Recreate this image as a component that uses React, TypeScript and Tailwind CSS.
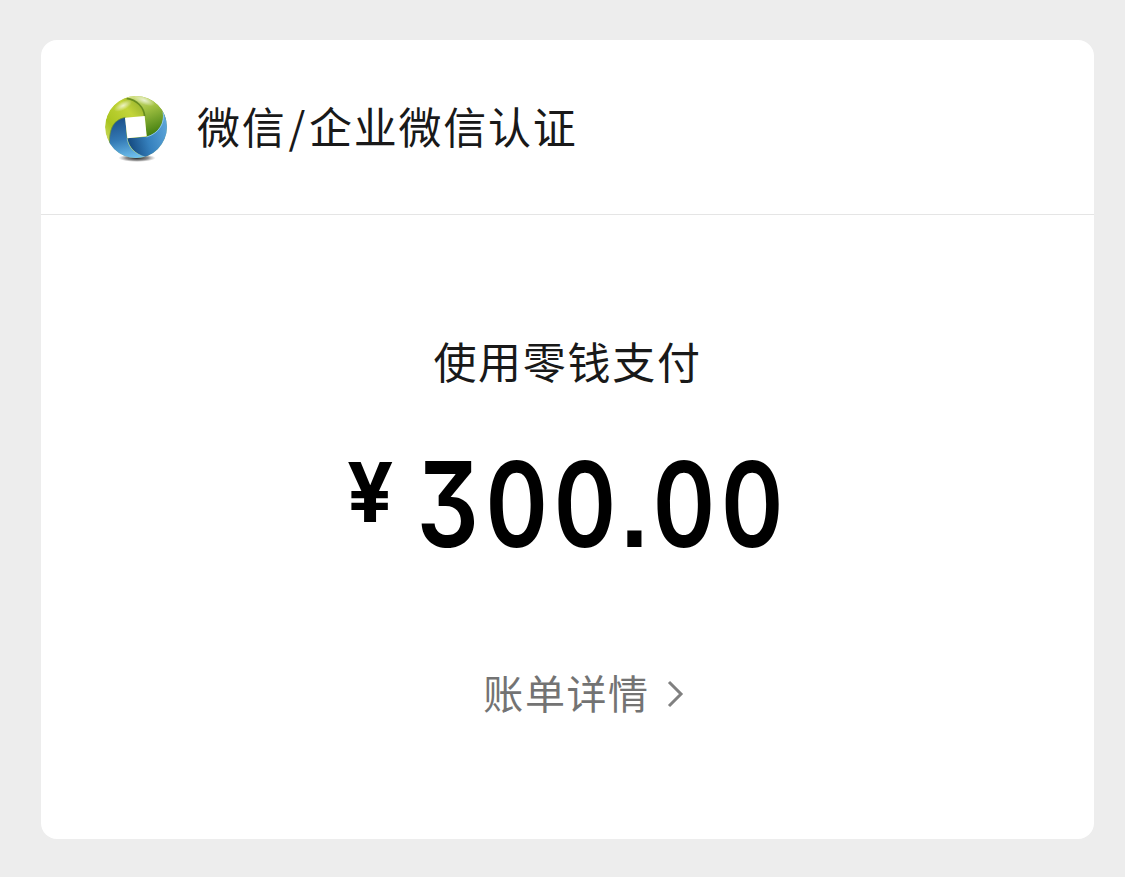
function PayLogo() {
  return (
    <svg className="h-[85px] w-[85px] shrink-0" viewBox="0 0 255 255">
      <defs>
        <linearGradient id="greenLeft" x1="0" y1="0.9" x2="0.9" y2="0.1">
          <stop offset="0" stopColor="#e3e88a" />
          <stop offset="0.3" stopColor="#a9c41f" />
          <stop offset="0.6" stopColor="#c3d53a" />
          <stop offset="1" stopColor="#6d9020" />
        </linearGradient>
        <linearGradient id="greenRight" x1="0.1" y1="0" x2="0.5" y2="1">
          <stop offset="0" stopColor="#e4ec9c" />
          <stop offset="0.45" stopColor="#a3c243" />
          <stop offset="1" stopColor="#437f10" />
        </linearGradient>
        <linearGradient id="blueLeft" x1="0.4" y1="0" x2="0.6" y2="1">
          <stop offset="0" stopColor="#1c508a" />
          <stop offset="0.5" stopColor="#3379b4" />
          <stop offset="1" stopColor="#6fc0ee" />
        </linearGradient>
        <linearGradient id="blueRight" x1="0" y1="0.6" x2="1" y2="0.3">
          <stop offset="0" stopColor="#154a80" />
          <stop offset="0.4" stopColor="#3580bd" />
          <stop offset="1" stopColor="#68b0e2" />
        </linearGradient>
        <radialGradient id="shadow">
          <stop offset="0" stopColor="#222" stopOpacity="1" />
          <stop offset="0.6" stopColor="#444" stopOpacity="0.6" />
          <stop offset="1" stopColor="#777" stopOpacity="0" />
        </radialGradient>
        <radialGradient id="shine">
          <stop offset="0" stopColor="#fff" stopOpacity="0.7" />
          <stop offset="1" stopColor="#fff" stopOpacity="0" />
        </radialGradient>
        <clipPath id="ball">
          <circle cx="123" cy="126" r="93" />
        </clipPath>
      </defs>
      <ellipse cx="126" cy="219" rx="56" ry="12" fill="url(#shadow)" />
      <g clipPath="url(#ball)">
        <circle cx="123" cy="126" r="93" fill="url(#greenLeft)" />
        <path d="M95 38C128 44 148 68 149 93L155 155C187 153 207 132 216 100L225 20L90 20Z" fill="url(#greenRight)" />
        <path d="M95 40C126 44 147 67 149 94" fill="none" stroke="#4f7714" strokeWidth="5" opacity="0.7" />
        <path d="M202 70C212 112 192 145 155 155L97 160C102 186 121 207 150 217L225 220L235 105Z" fill="url(#blueRight)" />
        <path d="M91 97C57 104 42 126 43 182C62 215 104 229 150 216C120 207 99 190 96 160Z" fill="url(#blueLeft)" />
        <path d="M43 178C42 126 59 104 91 97" fill="none" stroke="#7fa024" strokeWidth="3" opacity="0.7" />
        <path d="M96 160C101 188 119 207 151 216" fill="none" stroke="#8cc9ec" strokeWidth="3" opacity="0.6" />
        <path d="M204 80C211 114 192 145 155 156" fill="none" stroke="#9ed1ef" strokeWidth="3" opacity="0.8" />
        <ellipse cx="84" cy="62" rx="30" ry="13" fill="url(#shine)" transform="rotate(-28 84 62)" />
        <ellipse cx="148" cy="46" rx="34" ry="13" fill="url(#shine)" transform="rotate(22 148 46)" />
      </g>
      <path d="M90 98L149 93L155 154L97 160Z" fill="#fff" />
    </svg>
  );
}

export default function App() {
  return (
    <div className="h-[877px] w-[1125px] bg-[#ededed] pt-10 pl-[41px] font-['Noto_Sans_CJK_SC',sans-serif]">
      <div className="h-[799px] w-[1053px] overflow-hidden rounded-[16px] bg-white">
        <div className="flex h-[175px] items-center border-b border-[#e5e5e5] pl-[54px]">
          <PayLogo />
          <h1 className="mb-[4px] ml-[17px] text-[43px] leading-[60px] tracking-[1.75px] whitespace-nowrap text-[#191919]">
            微信<span className="mx-[2px]">/</span>企业微信认证
          </h1>
        </div>

        <div className="flex flex-col items-center">
          <p className="mt-[115px] text-[43px] leading-[60px] tracking-[1.7px] text-[#191919]">使用零钱支付</p>

          <div className="mt-[51px] flex h-[125px] w-[442px] items-start font-['Inter',sans-serif] text-black">
            <span className="w-[70px] shrink-0 origin-left scale-x-[0.98] text-[83px] leading-[102px] font-bold">¥</span>
            <span className="shrink-0 origin-left scale-x-[0.83] text-[118px] leading-[126px] font-semibold tracking-[5.7px] [font-feature-settings:'cv09','tnum','ss07']">
              300.00
            </span>
          </div>

          <a className="mt-[96px] ml-[33px] flex items-center text-[40px] leading-[60px] tracking-[1.6px] text-[#737373]">
            账单详情
            <svg className="mt-[4px] ml-[17px] h-[30px] w-[18px]" viewBox="0 0 18 30" fill="none" stroke="#808080" strokeWidth="3">
              <path d="M2 3L14 15L2 27" />
            </svg>
          </a>
        </div>
      </div>
    </div>
  );
}
